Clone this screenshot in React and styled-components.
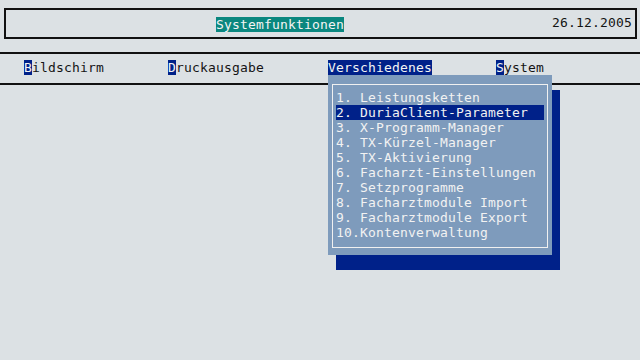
import styled, { createGlobalStyle } from "styled-components";

const GlobalStyle = createGlobalStyle`
  body {
    margin: 0;
    background: #dce1e4;
    font-family: "DejaVu Sans Mono", "Liberation Mono", monospace;
    font-size: 13px;
    letter-spacing: 0.17px;
    color: #141414;
  }
`;

const menus = [
  { hot: "B", rest: "ildschirm", col: 4 },
  { hot: "D", rest: "ruckausgabe", col: 22 },
  { hot: "V", rest: "erschiedenes", col: 42, open: true },
  { hot: "S", rest: "ystem", col: 63 },
];

const entries = [
  "1. Leistungsketten",
  "2. DuriaClient-Parameter",
  "3. X-Programm-Manager",
  "4. TX-Kürzel-Manager",
  "5. TX-Aktivierung",
  "6. Facharzt-Einstellungen",
  "7. Setzprogramme",
  "8. Facharztmodule Import",
  "9. Facharztmodule Export",
  "10.Kontenverwaltung",
];

const App = () => {
  return (
    <Screen>
      <GlobalStyle />
      <Header>
        <Title>Systemfunktionen</Title>
        <DateText>26.12.2005</DateText>
      </Header>
      <MenuBar>
        {menus.map((m) => (
          <MenuItem key={m.hot} $col={m.col} $open={m.open}>
            <Hot>{m.hot}</Hot>
            {m.rest}
          </MenuItem>
        ))}
      </MenuBar>
      <Dropdown>
        <Frame>
          {entries.map((e, i) => (
            <Entry key={e} $active={i === 1}>
              {e}
            </Entry>
          ))}
        </Frame>
      </Dropdown>
    </Screen>
  );
};

export default App;

const Screen = styled.div`
  position: relative;
  width: 640px;
  height: 360px;
  padding-top: 8px;
  box-sizing: border-box;
  overflow: hidden;
`;

const Header = styled.div`
  display: flex;
  align-items: center;
  margin: 0 3px 0 4px;
  height: 31px;
  box-sizing: border-box;
  border: 2px solid #111;
  padding: 0 3px 0 210px;
  line-height: 15px;
`;

const Title = styled.span`
  background: #0a877f;
  color: #f4f4f4;
  margin-top: 1px;
`;

const DateText = styled.span`
  margin-left: auto;
  margin-top: -2px;
`;

const MenuBar = styled.div`
  display: grid;
  grid-template-columns: repeat(80, 8px);
  margin-top: 13px;
  height: 33px;
  box-sizing: border-box;
  border-top: 2px solid #111;
  border-bottom: 2px solid #111;
  padding-top: 6px;
  line-height: 15px;
`;

const MenuItem = styled.div`
  grid-row: 1;
  grid-column: ${(p) => p.$col} / span 16;
  justify-self: start;
  height: 15px;
  background: ${(p) => (p.$open ? "#002189" : "transparent")};
  color: ${(p) => (p.$open ? "#f4f4f4" : "inherit")};
`;

const Hot = styled.span`
  background: #002189;
  color: #f4f4f4;
`;

const Dropdown = styled.div`
  position: absolute;
  left: 328px;
  top: 75px;
  width: 224px;
  height: 180px;
  background: #7e9bbc;
  box-shadow: 8px 15px 0 #002189;
  padding: 9px 4px 7px 4px;
  box-sizing: border-box;
`;

const Frame = styled.div`
  height: 100%;
  box-sizing: border-box;
  border: 1px solid #f0f0f0;
  padding: 5px 3px 0 3px;
  color: #f2f2f2;
  line-height: 15px;
`;

const Entry = styled.div`
  height: 15px;
  white-space: pre;
  background: ${(p) => (p.$active ? "#002189" : "transparent")};
`;
